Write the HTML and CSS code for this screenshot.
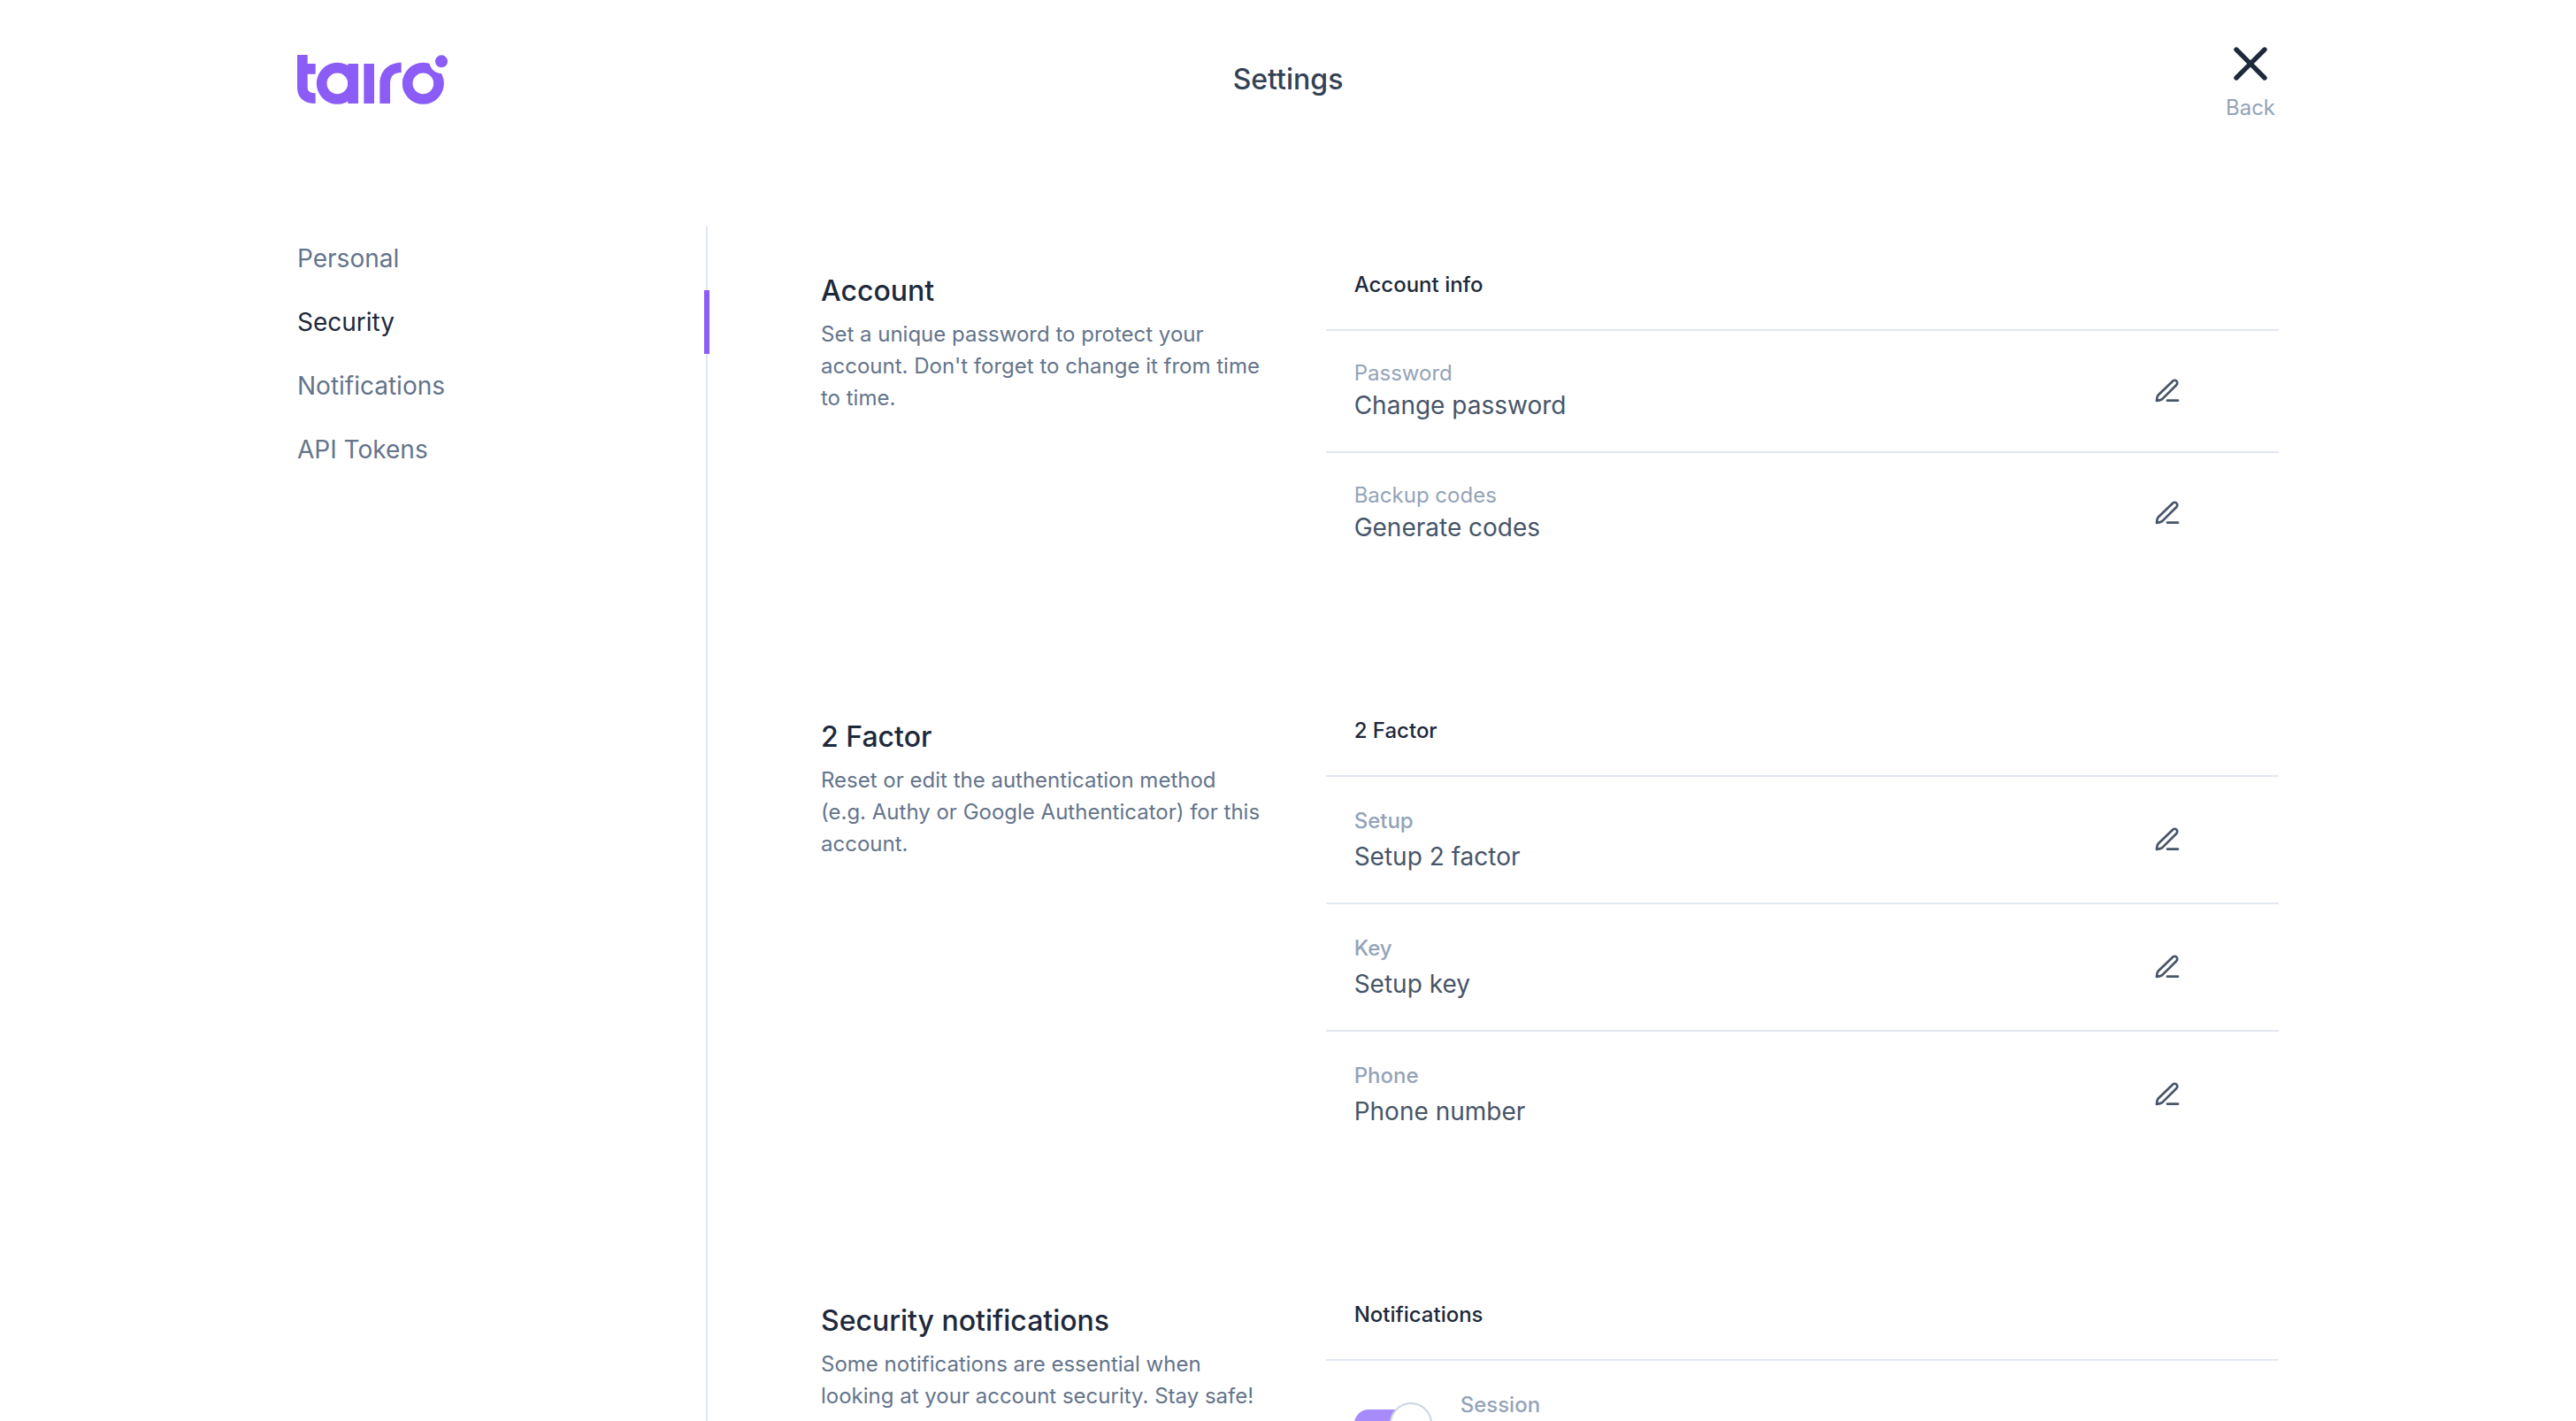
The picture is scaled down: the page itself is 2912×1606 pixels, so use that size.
FILE: index.html
```html
<!DOCTYPE html>
<html lang="en">
<head>
<meta charset="utf-8">
<meta name="viewport" content="width=device-width, initial-scale=1">
<title>Settings</title>
<link rel="stylesheet" href="styles.css">
</head>
<body>
<svg class="sprite" aria-hidden="true">
  <symbol id="icon-pen" viewBox="0 0 24 24">
    <path d="M12 20h9M16.6 3.5a2.26 2.26 0 0 1 3.2 3.2L8.2 18.3a4 4 0 0 1-2.3 1.3L3 20.2l.4-2.8a4 4 0 0 1 1.1-2.2Z"/>
  </symbol>
</svg>
<div class="app">
  <header class="header">
    <a class="logo" href="#" aria-label="tairo">
      <svg viewBox="48 36 510 168" aria-hidden="true">
        <path d="M48 36H83V66H110V101H83V147Q83 166 110 166V201C73 201 48 183 48 147Z"/>
        <circle class="ring" cx="184" cy="133" r="53"/>
        <path d="M220 66H255V201H220ZM274 66H309V201H274Z"/>
        <path d="M328 201V133C328 90 358 62 401 62V96C376 96 363 108 363 133V201Z"/>
        <circle class="ring" cx="475" cy="133" r="53"/>
        <circle class="notch" cx="537" cy="58" r="41"/>
        <circle cx="537" cy="58" r="21"/>
      </svg>
    </a>
    <h1 class="page-title">Settings</h1>
    <a class="back" href="#">
      <svg viewBox="0 0 24 24" aria-hidden="true"><path d="M18 6L6 18M6 6l12 12"/></svg>
      <span>Back</span>
    </a>
  </header>
  <div class="layout">
    <nav class="sidebar" aria-label="Settings">
      <a class="nav-link" href="#">Personal</a>
      <a class="nav-link active" href="#" aria-current="page">Security</a>
      <a class="nav-link" href="#">Notifications</a>
      <a class="nav-link" href="#">API Tokens</a>
    </nav>
    <main class="content">
      <section class="section">
        <div class="intro">
          <h2>Account</h2>
          <p>Set a unique password to protect your account. Don't forget to change it from time to time.</p>
        </div>
        <div class="panel">
          <h3>Account info</h3>
          <div class="row">
            <div class="field"><span class="label">Password</span><span class="value">Change password</span></div>
            <button class="edit" type="button" aria-label="Change password"><svg><use href="#icon-pen"/></svg></button>
          </div>
          <div class="row">
            <div class="field"><span class="label">Backup codes</span><span class="value">Generate codes</span></div>
            <button class="edit" type="button" aria-label="Generate codes"><svg><use href="#icon-pen"/></svg></button>
          </div>
        </div>
      </section>
      <section class="section">
        <div class="intro">
          <h2>2 Factor</h2>
          <p>Reset or edit the authentication method (e.g. Authy or Google Authenticator) for this account.</p>
        </div>
        <div class="panel roomy">
          <h3>2 Factor</h3>
          <div class="row">
            <div class="field"><span class="label">Setup</span><span class="value">Setup 2 factor</span></div>
            <button class="edit" type="button" aria-label="Setup 2 factor"><svg><use href="#icon-pen"/></svg></button>
          </div>
          <div class="row">
            <div class="field"><span class="label">Key</span><span class="value">Setup key</span></div>
            <button class="edit" type="button" aria-label="Setup key"><svg><use href="#icon-pen"/></svg></button>
          </div>
          <div class="row">
            <div class="field"><span class="label">Phone</span><span class="value">Phone number</span></div>
            <button class="edit" type="button" aria-label="Phone number"><svg><use href="#icon-pen"/></svg></button>
          </div>
        </div>
      </section>
      <section class="section">
        <div class="intro">
          <h2>Security notifications</h2>
          <p>Some notifications are essential when looking at your account security. Stay safe!</p>
        </div>
        <div class="panel roomy">
          <h3>Notifications</h3>
          <div class="row toggle-row">
            <input class="switch" type="checkbox" id="session" checked>
            <label class="label" for="session">Session</label>
          </div>
        </div>
      </section>
    </main>
  </div>
</div>
</body>
</html>
```
FILE: styles.css
```css
* {
  box-sizing: border-box;
  margin: 0;
}

body {
  background: #fff;
  color: #1e293b;
  font-family: Inter, "Liberation Sans", sans-serif;
  font-size: 24px;
  line-height: 36px;
}

a {
  text-decoration: none;
}

.sprite {
  display: none;
}

.app {
  display: flex;
  flex-direction: column;
  height: 100vh;
  max-width: 2240px;
  margin: 0 auto;
  overflow: hidden;
}

.header {
  display: grid;
  grid-template-columns: 1fr auto 1fr;
  align-items: center;
  padding: 40px 0 116px;
}

.logo svg {
  display: block;
  width: 170px;
  height: 56px;
  fill: #8b5cf6;
}

.logo {
  justify-self: start;
}

.logo .ring {
  fill: none;
  stroke: #8b5cf6;
  stroke-width: 35;
}

.logo .notch {
  fill: #fff;
}

.page-title {
  color: #334155;
  font-size: 32px;
  font-weight: 500;
  line-height: 48px;
}

.back {
  display: flex;
  flex-direction: column;
  align-items: center;
  justify-self: end;
  color: #94a3b8;
}

.back svg {
  width: 64px;
  height: 64px;
  fill: none;
  stroke: #1e293b;
  stroke-width: 2;
  stroke-linecap: round;
}

.layout {
  display: flex;
  flex: 1;
  min-height: 0;
}

.sidebar {
  flex: 0 0 464px;
  border-right: 2px solid #e2e8f0;
}

.nav-link {
  display: block;
  margin-right: -4px;
  border-right: 6px solid transparent;
  color: #64748b;
  font-size: 28px;
  line-height: 72px;
}

.nav-link.active {
  border-color: #8b5cf6;
  color: #1e293b;
}

.content {
  flex: 1;
  padding-left: 128px;
}

.section {
  display: grid;
  grid-template-columns: repeat(12, minmax(0, 1fr));
  column-gap: 64px;
  padding: 32px 0 112px;
}

.intro {
  grid-column: span 4;
  padding: 16px 8px 0 0;
  color: #64748b;
}

.intro h2 {
  margin-bottom: 6px;
  color: #1e293b;
  font-size: 32px;
  font-weight: 500;
  line-height: 50px;
}

.panel {
  grid-column: span 8;
}

.panel h3 {
  padding: 16px 32px 32px;
  font-size: 24px;
  font-weight: 500;
}

.row {
  display: grid;
  grid-template-columns: 1fr 188px;
  align-items: center;
  padding: 32px;
  border-top: 2px solid #e2e8f0;
}

.field {
  display: flex;
  flex-direction: column;
}

.label {
  color: #94a3b8;
  line-height: 32px;
}

.value {
  color: #475569;
  font-size: 28px;
  line-height: 40px;
}

.roomy .field {
  gap: 2px;
}

.roomy .label {
  font-weight: 500;
  line-height: 36px;
}

.edit {
  display: grid;
  place-items: center;
  justify-self: center;
  width: 64px;
  height: 64px;
  padding: 0;
  border: 0;
  border-radius: 50%;
  background: none;
  color: #475569;
  cursor: pointer;
}

.edit svg {
  width: 32px;
  height: 32px;
  fill: none;
  stroke: currentColor;
  stroke-width: 2;
  stroke-linecap: round;
  stroke-linejoin: round;
}

.toggle-row {
  grid-template-columns: 88px 1fr;
  column-gap: 32px;
  min-height: 144px;
}

.toggle-row .label {
  align-self: start;
}

.switch {
  display: flex;
  align-items: center;
  justify-content: flex-end;
  width: 88px;
  height: 32px;
  margin: 0;
  border-radius: 16px;
  background: #a78bfa;
  appearance: none;
}

.switch::before {
  content: "";
  flex: none;
  box-sizing: border-box;
  width: 48px;
  height: 48px;
  border: 2px solid #cbd5e1;
  border-radius: 50%;
  background: #fff;
}
```
